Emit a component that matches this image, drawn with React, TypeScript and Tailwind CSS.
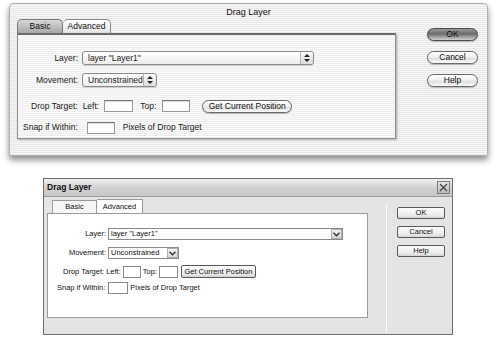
import React from "react";

const mac = "font-['Liberation_Sans',Arial,sans-serif]";
const stripe =
  "bg-[repeating-linear-gradient(to_bottom,#e9e9e9_0px,#e9e9e9_1px,#f5f5f5_1px,#f5f5f5_2px)]";
const stripeLight =
  "bg-[repeating-linear-gradient(to_bottom,#efefef_0px,#efefef_1px,#f9f9f9_1px,#f9f9f9_2px)]";

function MacUpDown() {
  return (
    <svg width="6" height="8" viewBox="0 0 6 8">
      <path d="M3 0 L6 3 L0 3 Z" fill="#222" />
      <path d="M3 8 L6 5 L0 5 Z" fill="#222" />
    </svg>
  );
}

function MacSelect({ w, text }: { w: number; text: string }) {
  return (
    <div
      className="h-[14px] rounded-[3px] border border-[#8a8a8a] bg-[linear-gradient(to_bottom,#ffffff,#ececec)] flex items-center shadow-[0_1px_1px_rgba(0,0,0,0.15)]"
      style={{ width: w }}
    >
      <span className="flex-1 pl-[5px] text-[8.5px] text-[#1a1a1a] leading-none">{text}</span>
      <span className="w-[13px] h-full border-l border-[#b5b5b5] flex items-center justify-center bg-[linear-gradient(to_bottom,#fafafa,#dcdcdc)] rounded-r-[3px]">
        <MacUpDown />
      </span>
    </div>
  );
}

function MacInput({ w }: { w: number }) {
  return (
    <div
      className="h-[12px] bg-white border border-[#9a9a9a] border-t-[#7a7a7a] shadow-[inset_0_1px_1px_rgba(0,0,0,0.15)]"
      style={{ width: w }}
    />
  );
}

function MacButton({ w, text, dark }: { w: number; text: string; dark?: boolean }) {
  return (
    <div
      className={
        "h-[13px] rounded-full border flex items-center justify-center text-[8.5px] leading-none text-[#111] shadow-[0_1px_1px_rgba(0,0,0,0.25)] " +
        (dark
          ? "border-[#4a4a4a] bg-[linear-gradient(to_bottom,#9a9a9a,#6a6a6a_45%,#8a8a8a_60%,#d0d0d0)]"
          : "border-[#6a6a6a] bg-[linear-gradient(to_bottom,#ffffff,#f0f0f0_45%,#e0e0e0_60%,#fafafa)]")
      }
      style={{ width: w }}
    >
      {text}
    </div>
  );
}

function MacDialog() {
  return (
    <div
      className={
        "ml-[9px] mt-[3px] w-[479px] h-[153px] border border-[#b0b0b0] rounded-t-[4px] shadow-[0_4px_6px_rgba(0,0,0,0.45)] flex flex-col " +
        stripe +
        " " +
        mac
      }
    >
      <div className="h-[15px] flex items-center justify-center text-[9px] text-[#111] leading-none pt-[2px]">
        Drag Layer
      </div>
      <div className="flex pl-[7px]">
        <div className="w-[379px] flex flex-col">
          <div className="flex h-[14px] pl-[0px]">
            <div className="w-[46px] h-[14px] rounded-t-[5px] border border-b-0 border-[#7a7a7a] bg-[linear-gradient(to_bottom,#d8d8d8,#a8a8a8)] flex items-center justify-center text-[8.5px] text-[#111] leading-none">
              Basic
            </div>
            <div className="w-[48px] h-[14px] rounded-t-[5px] border border-b-0 border-l-0 border-[#8a8a8a] bg-[linear-gradient(to_bottom,#ffffff,#e4e4e4)] flex items-center justify-center text-[8.5px] text-[#111] leading-none">
              Advanced
            </div>
          </div>
          <div
            className={
              "h-[106px] border border-[#8c8c8c] border-t-[#6a6a6a] border-t-2 shadow-[1px_1px_2px_rgba(0,0,0,0.3)] flex flex-col text-[8.5px] text-[#1a1a1a] leading-none " +
              stripeLight
            }
          >
            <div className="flex items-center mt-[16px] h-[14px]">
              <span className="w-[60px] text-right">Layer:</span>
              <span className="ml-[4px]">
                <MacSelect w={232} text={'layer "Layer1"'} />
              </span>
            </div>
            <div className="flex items-center mt-[8px] h-[14px]">
              <span className="w-[60px] text-right">Movement:</span>
              <span className="ml-[4px]">
                <MacSelect w={75} text="Unconstrained" />
              </span>
            </div>
            <div className="flex items-center mt-[12px] h-[14px]">
              <span className="ml-[13px]">Drop Target:</span>
              <span className="ml-[5px]">Left:</span>
              <span className="ml-[5px]">
                <MacInput w={29} />
              </span>
              <span className="ml-[7px]">Top:</span>
              <span className="ml-[6px]">
                <MacInput w={28} />
              </span>
              <span className="ml-[12px]">
                <MacButton w={90} text="Get Current Position" />
              </span>
            </div>
            <div className="flex items-center mt-[8px] h-[13px]">
              <span className="ml-[5px]">Snap if Within:</span>
              <span className="ml-[9px]">
                <MacInput w={28} />
              </span>
              <span className="ml-[8px]">Pixels of Drop Target</span>
            </div>
          </div>
        </div>
        <div className="ml-[31px] mt-[9px] flex flex-col gap-[10px]">
          <MacButton w={51} text="OK" dark />
          <MacButton w={51} text="Cancel" />
          <MacButton w={51} text="Help" />
        </div>
      </div>
    </div>
  );
}

const win = "font-['Liberation_Sans',Tahoma,sans-serif]";

function WinArrow() {
  return (
    <svg width="7" height="5" viewBox="0 0 7 5">
      <path d="M0.5 0.8 L3.5 3.8 L6.5 0.8" stroke="#333" strokeWidth="1.4" fill="none" />
    </svg>
  );
}

function WinSelect({ w, text }: { w: number; text: string }) {
  return (
    <div className="h-[12px] border border-[#8a8a8a] bg-white flex items-center" style={{ width: w }}>
      <span className="flex-1 pl-[2px] text-[7.5px] leading-none text-[#111]">{text}</span>
      <span className="w-[11px] h-[10px] mr-[0px] border border-[#b0b0b0] bg-[linear-gradient(to_bottom,#f4f4f4,#d6d6d6)] flex items-center justify-center">
        <WinArrow />
      </span>
    </div>
  );
}

function WinInput({ w }: { w: number }) {
  return <div className="h-[12px] bg-white border border-[#8a8a8a]" style={{ width: w }} />;
}

function WinButton({ w, h, text }: { w: number; h: number; text: string }) {
  return (
    <div
      className="border border-[#5a5a5a] rounded-[2px] bg-[linear-gradient(to_bottom,#fbfbfb,#ececec_70%,#d4d4d4)] flex items-center justify-center text-[7.5px] leading-none text-[#111]"
      style={{ width: w, height: h }}
    >
      {text}
    </div>
  );
}

function WinDialog() {
  return (
    <div
      className={
        "ml-[43px] mt-[22px] w-[410px] h-[157px] border border-[#6e6e6e] bg-[#e4e4e4] flex flex-col " + win
      }
    >
      <div className="h-[18px] bg-[linear-gradient(to_bottom,#f0f0f0,#d2d2d2_50%,#c6c6c6)] flex items-center justify-between pl-[3px] pr-[2px] border-b border-[#9a9a9a]">
        <span className="text-[8.5px] font-bold text-[#111] leading-none">Drag Layer</span>
        <div className="w-[13px] h-[13px] border border-[#7a7a7a] bg-[linear-gradient(to_bottom,#e8e8e8,#b8b8b8)] flex items-center justify-center">
          <svg width="9" height="9" viewBox="0 0 9 9">
            <path d="M1 1 L8 8 M8 1 L1 8" stroke="#444" strokeWidth="1.3" />
          </svg>
        </div>
      </div>
      <div className="flex flex-1">
        <div className="flex flex-col pl-[3px] pt-[2px]">
          <div className="flex h-[14px] pl-[5px]">
            <div className="w-[45px] h-[13px] mt-[1px] border border-b-0 border-[#9a9a9a] bg-[#f6f6f6] flex items-center justify-center text-[7.5px] leading-none text-[#111]">
              Basic
            </div>
            <div className="w-[46px] h-[14px] border border-b-0 border-l-0 border-[#9a9a9a] bg-white flex items-center justify-center text-[7.5px] leading-none text-[#111]">
              Advanced
            </div>
          </div>
          <div className="w-[321px] h-[105px] bg-white border border-[#9a9a9a] flex flex-col text-[7.5px] leading-none text-[#111]">
            <div className="flex items-center mt-[14px] h-[12px]">
              <span className="w-[58px] text-right">Layer:</span>
              <span className="ml-[2px]">
                <WinSelect w={235} text={'layer "Layer1"'} />
              </span>
            </div>
            <div className="flex items-center mt-[7px] h-[12px]">
              <span className="w-[58px] text-right">Movement:</span>
              <span className="ml-[2px]">
                <WinSelect w={71} text="Unconstrained" />
              </span>
            </div>
            <div className="flex items-center mt-[6px] h-[13px]">
              <span className="ml-[15px]">Drop Target:</span>
              <span className="ml-[2px]">Left:</span>
              <span className="ml-[2px]">
                <WinInput w={18} />
              </span>
              <span className="ml-[2px]">Top:</span>
              <span className="ml-[2px]">
                <WinInput w={19} />
              </span>
              <span className="ml-[3px]">
                <WinButton w={75} h={13} text="Get Current Position" />
              </span>
            </div>
            <div className="flex items-center mt-[4px] h-[12px]">
              <span className="ml-[9px]">Snap if Within:</span>
              <span className="ml-[3px]">
                <WinInput w={20} />
              </span>
              <span className="ml-[2px]">Pixels of Drop Target</span>
            </div>
          </div>
        </div>
        <div className="ml-[18px] mt-[8px] mb-[2px] w-px bg-[#a8a8a8] border-r border-white" />
        <div className="ml-[10px] mt-[10px] flex flex-col gap-[7px]">
          <WinButton w={48} h={12} text="OK" />
          <WinButton w={48} h={12} text="Cancel" />
          <WinButton w={48} h={12} text="Help" />
        </div>
      </div>
    </div>
  );
}

export default function App() {
  return (
    <div className="w-[499px] h-[337px] bg-white overflow-hidden flex flex-col">
      <MacDialog />
      <WinDialog />
    </div>
  );
}
